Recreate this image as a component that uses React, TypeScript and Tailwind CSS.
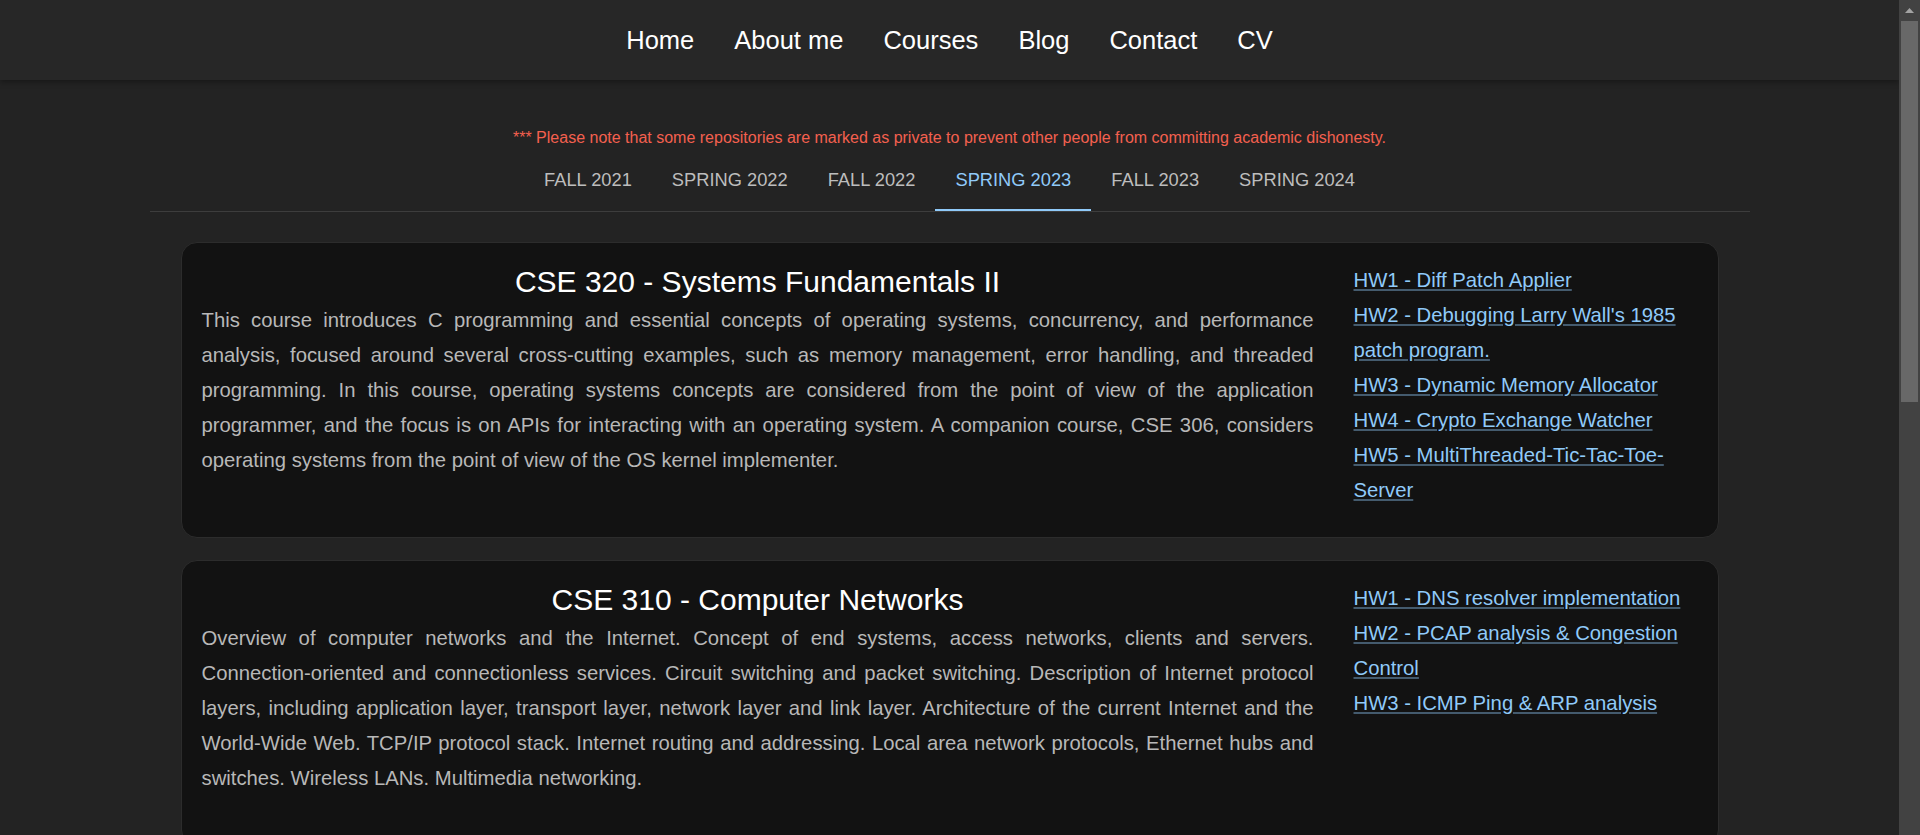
import React, { useState } from "react";

interface Course {
  title: string;
  description: string;
  links: string[];
}

const semesters = ["FALL 2021", "SPRING 2022", "FALL 2022", "SPRING 2023", "FALL 2023", "SPRING 2024"];

const courses: Course[] = [
  {
    title: "CSE 320 - Systems Fundamentals II",
    description:
      "This course introduces C programming and essential concepts of operating systems, concurrency, and performance analysis, focused around several cross-cutting examples, such as memory management, error handling, and threaded programming. In this course, operating systems concepts are considered from the point of view of the application programmer, and the focus is on APIs for interacting with an operating system. A companion course, CSE 306, considers operating systems from the point of view of the OS kernel implementer.",
    links: [
      "HW1 - Diff Patch Applier",
      "HW2 - Debugging Larry Wall's 1985 patch program.",
      "HW3 - Dynamic Memory Allocator",
      "HW4 - Crypto Exchange Watcher",
      "HW5 - MultiThreaded-Tic-Tac-Toe-Server",
    ],
  },
  {
    title: "CSE 310 - Computer Networks",
    description:
      "Overview of computer networks and the Internet. Concept of end systems, access networks, clients and servers. Connection-oriented and connectionless services. Circuit switching and packet switching. Description of Internet protocol layers, including application layer, transport layer, network layer and link layer. Architecture of the current Internet and the World-Wide Web. TCP/IP protocol stack. Internet routing and addressing. Local area network protocols, Ethernet hubs and switches. Wireless LANs. Multimedia networking.",
    links: [
      "HW1 - DNS resolver implementation",
      "HW2 - PCAP analysis & Congestion Control",
      "HW3 - ICMP Ping & ARP analysis",
    ],
  },
];

function CourseCard({ course }: { course: Course }) {
  return (
    <div className="flex gap-10 rounded-2xl border border-[#2c2c2c] bg-[#121212] px-5 pt-5 pb-[29px]">
      <div className="flex-1">
        <h2 className="text-center text-[30px] leading-[38px] text-white">{course.title}</h2>
        <p className="mt-[2px] mb-5 text-justify text-[20.3px] leading-[35px] text-[#b8b8b8]">{course.description}</p>
      </div>
      <ul className="flex w-[344px] shrink-0 flex-col">
        {course.links.map((l) => (
          <li key={l}>
            <a
              href="#"
              className="text-[20.3px] leading-[35px] text-[#90caf9] underline decoration-[rgba(144,202,249,0.4)]"
            >
              {l}
            </a>
          </li>
        ))}
      </ul>
    </div>
  );
}

export default function App() {
  const [active, setActive] = useState(3);

  return (
    <div className="flex h-screen bg-[#232323] font-['Liberation_Sans',Arial,sans-serif]">
      <div className="flex-1 overflow-y-auto">
        {/* Header */}
        <header className="flex h-20 items-center justify-center bg-[#272727] shadow-[0_2px_6px_rgba(0,0,0,0.35)]">
          <nav className="flex">
            {["Home", "About me", "Courses", "Blog", "Contact", "CV"].map((item) => (
              <a key={item} href="#" className="px-5 text-[25.5px] text-white">
                {item}
              </a>
            ))}
          </nav>
        </header>

        <main className="mx-auto max-w-[1600px] pt-[47px] pb-10">
          <p className="text-center text-[16px] leading-[22px] text-[#f4604f]">
            *** Please note that some repositories are marked as private to prevent other people from committing academic dishonesty.
          </p>

          {/* Semester tabs */}
          <div className="mt-[2px] flex justify-center border-b border-[#3d3d3d]">
            {semesters.map((s, i) => (
              <button
                key={s}
                onClick={() => setActive(i)}
                className={`relative h-[60px] px-5 pb-[2px] text-[18.3px] ${i === active ? "text-[#90caf9]" : "text-[#bdbdbd]"}`}
              >
                {s}
                {i === active && <span className="absolute bottom-0 left-0 h-[2px] w-full bg-[#90caf9]" />}
              </button>
            ))}
          </div>

          <div className="mt-[30px] flex flex-col gap-[22px] px-[31px]">
            {courses.map((c) => (
              <CourseCard key={c.title} course={c} />
            ))}
          </div>
        </main>
      </div>

      {/* Scrollbar */}
      <aside className="flex w-[21px] shrink-0 flex-col bg-[#424242] pt-2">
        <svg width="9" height="5" viewBox="0 0 9 5" className="mx-auto">
          <polygon points="4.5,0 9,5 0,5" fill="#a3a3a3" />
        </svg>
        <div className="mx-[2px] mt-2 h-[381px] bg-[#686868]" />
      </aside>
    </div>
  );
}
